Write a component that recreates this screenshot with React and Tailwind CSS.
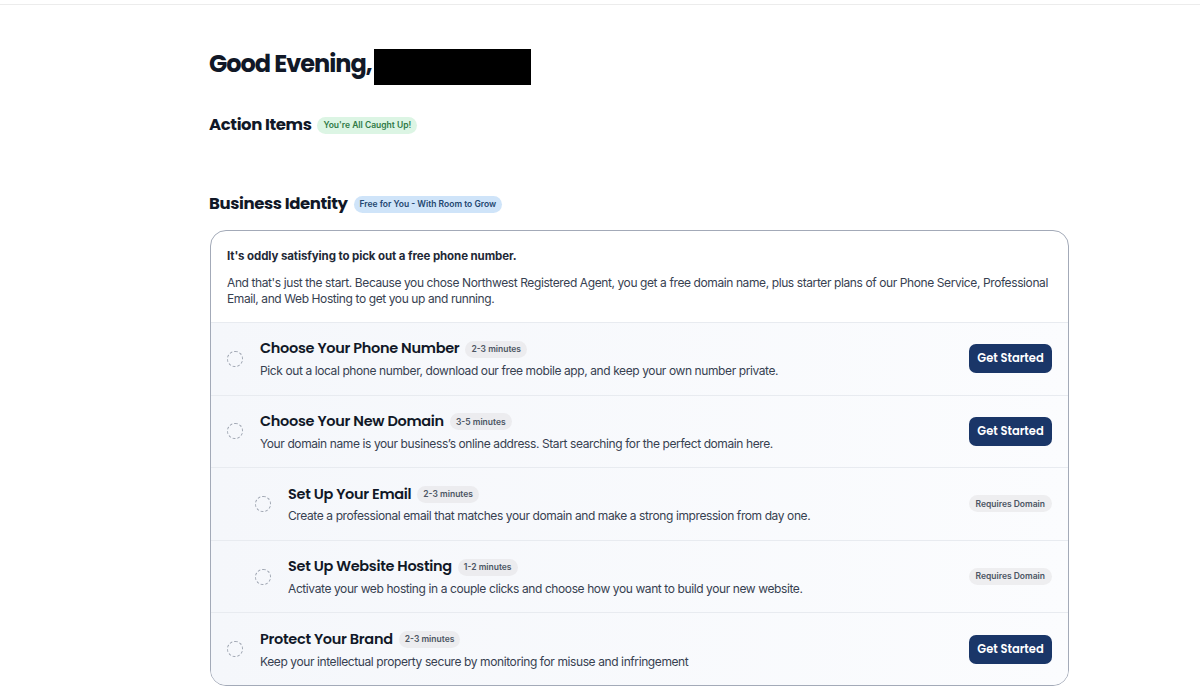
import { Fragment } from "react";

const heading = { fontFamily: "Poppins, Inter, 'Noto Sans', sans-serif" };

const rows = [
  {
    title: "Choose Your Phone Number",
    time: "2-3 minutes",
    desc: "Pick out a local phone number, download our free mobile app, and keep your own number private.",
  },
  {
    title: "Choose Your New Domain",
    time: "3-5 minutes",
    desc: "Your domain name is your business’s online address. Start searching for the perfect domain here.",
  },
  {
    title: "Set Up Your Email",
    time: "2-3 minutes",
    desc: "Create a professional email that matches your domain and make a strong impression from day one.",
    nested: true,
  },
  {
    title: "Set Up Website Hosting",
    time: "1-2 minutes",
    desc: "Activate your web hosting in a couple clicks and choose how you want to build your new website.",
    nested: true,
  },
  {
    title: "Protect Your Brand",
    time: "2-3 minutes",
    desc: "Keep your intellectual property secure by monitoring for misuse and infringement",
  },
];

function Pill({ children, className }) {
  return (
    <span className={`inline-flex items-center rounded-full px-[6px] h-[17px] text-[8.5px] font-semibold leading-none ${className}`}>
      {children}
    </span>
  );
}

function TaskRow({ task }) {
  return (
    <div
      className={`flex items-center border-t border-[#e8ebf0] bg-gradient-to-r from-[#f5f7fb] to-[#fbfcfe] pr-[16px] h-[72.6px] ${
        task.nested ? "pl-[44px]" : "pl-[16px]"
      }`}
    >
      <span className="w-[16px] h-[16px] rounded-full border-[1.5px] border-dashed border-[#9ca3af] shrink-0" />
      <div className="ml-[17px] flex-1 pt-[1px]">
        <div className="flex items-center gap-[6px] h-[24px]">
          <span className="text-[14.5px] font-semibold tracking-[-0.3px] text-[#111827]" style={heading}>
            {task.title}
          </span>
          <Pill className="bg-[#ececef] text-[#4b5563]">{task.time}</Pill>
        </div>
        <p className="text-[12px] leading-[20px] tracking-[-0.4px] text-[#374151]">{task.desc}</p>
      </div>
      {task.nested ? (
        <Pill className="bg-[#eeeef0] text-[#4b5563] px-[7px]">Requires Domain</Pill>
      ) : (
        <button className="h-[29px] w-[83px] rounded-[7px] bg-[#1a3668] text-white text-[11.5px] font-semibold" style={heading}>
          Get Started
        </button>
      )}
    </div>
  );
}

export default function App() {
  return (
    <div className="min-h-screen bg-white text-[#111827]" style={{ fontFamily: "Inter, 'Noto Sans', sans-serif" }}>
      <div className="h-[5px] border-b border-[#ececec]" />
      <div className="ml-[209px] w-[860px]">
        <h1 className="mt-[41px] h-[36px] flex items-center text-[24px] font-bold tracking-[-1px]" style={heading}>
          Good Evening,
          <span className="inline-block w-[157px] h-[36px] bg-black ml-[2px] mt-[6px]" />
        </h1>

        <div className="mt-[31px] flex items-center gap-[6px] h-[24px]">
          <h2 className="text-[16.5px] font-bold tracking-[-0.4px]" style={heading}>Action Items</h2>
          <Pill className="bg-[#dcf5e4] text-[#2f7a46]">You're All Caught Up!</Pill>
        </div>

        <div className="mt-[55px] flex items-center gap-[6px] h-[24px]">
          <h2 className="text-[16.5px] font-bold tracking-[-0.4px]" style={heading}>Business Identity</h2>
          <Pill className="bg-[#cfe4f9] text-[#23466f]">Free for You - With Room to Grow</Pill>
        </div>

        <div className="mt-[14px] ml-[1px] w-[859px] rounded-[16px] border border-[#a3aab8] overflow-hidden bg-white">
          <div className="px-[16px] pt-[17px] pb-[15px]">
            <p className="text-[11.5px] leading-[16px] font-bold tracking-[-0.1px] text-[#1f2937]">
              It's oddly satisfying to pick out a free phone number.
            </p>
            <p className="mt-[11px] text-[12px] leading-[16px] tracking-[-0.4px] text-[#374151]">
              And that's just the start. Because you chose Northwest Registered Agent, you get a free domain name, plus starter plans of our Phone Service, Professional Email, and Web Hosting to get you up and running.
            </p>
          </div>
          {rows.map((task) => (
            <Fragment key={task.title}>
              <TaskRow task={task} />
            </Fragment>
          ))}
        </div>
      </div>
    </div>
  );
}
